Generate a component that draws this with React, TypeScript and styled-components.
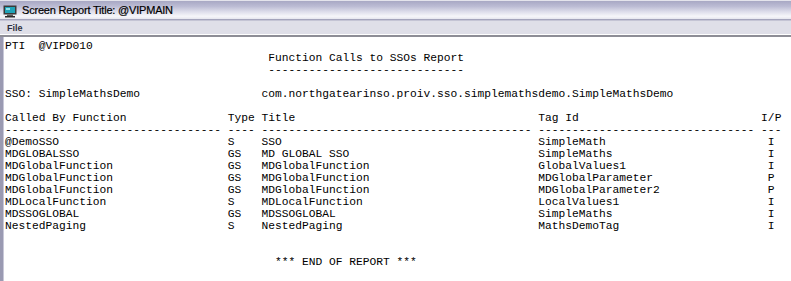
import styled, { createGlobalStyle } from 'styled-components';

const GlobalStyle = createGlobalStyle`
    html, body {
        margin: 0;
        padding: 0;
        background: #ffffff;
        overflow: hidden;
    }
`;

const reportLines = [
    "PTI  @VIPD010",
    "                                       Function Calls to SSOs Report",
    "                                       -----------------------------",
    "",
    "SSO: SimpleMathsDemo                  com.northgatearinso.proiv.sso.simplemathsdemo.SimpleMathsDemo",
    "",
    "Called By Function               Type Title                                    Tag Id                           I/P",
    "-------------------------------- ---- ---------------------------------------- -------------------------------- ---",
    "@DemoSSO                         S    SSO                                      SimpleMath                        I",
    "MDGLOBALSSO                      GS   MD GLOBAL SSO                            SimpleMaths                       I",
    "MDGlobalFunction                 GS   MDGlobalFunction                         GlobalValues1                     I",
    "MDGlobalFunction                 GS   MDGlobalFunction                         MDGlobalParameter                 P",
    "MDGlobalFunction                 GS   MDGlobalFunction                         MDGlobalParameter2                P",
    "MDLocalFunction                  S    MDLocalFunction                          LocalValues1                      I",
    "MDSSOGLOBAL                      GS   MDSSOGLOBAL                              SimpleMaths                       I",
    "NestedPaging                     S    NestedPaging                             MathsDemoTag                      I",
    "",
    "",
    "                                        *** END OF REPORT ***",
];

const App = () => {
    return (
        <Window>
            <GlobalStyle />
            <TitleBar>
                <WindowIcon width="14" height="14" viewBox="0 0 14 14">
                    <rect x="0.5" y="1.5" width="13" height="9" fill="#3a3a3a" />
                    <rect x="2" y="3" width="10" height="6" fill="#1fa3b8" />
                    <rect x="3" y="4" width="4" height="2" fill="#8fe0ea" />
                    <rect x="4" y="10.5" width="6" height="2" fill="#5a5a5a" />
                    <rect x="2" y="12" width="10" height="1.5" fill="#2a2a2a" />
                </WindowIcon>
                <TitleText>Screen Report Title: @VIPMAIN</TitleText>
            </TitleBar>
            <MenuBar>
                <MenuItem>File</MenuItem>
            </MenuBar>
            <ReportArea>
                {reportLines.map((line, i) => (
                    <ReportLine key={i}>{line || ' '}</ReportLine>
                ))}
            </ReportArea>
        </Window>
    );
};

export default App;

const Window = styled.div`
    width: 791px;
    height: 281px;
    display: flex;
    flex-direction: column;
    background: #ffffff;
    overflow: hidden;
`;

const TitleBar = styled.div`
    height: 20px;
    display: flex;
    align-items: center;
    gap: 5px;
    padding-left: 3px;
    box-sizing: border-box;
    border-top: 1px solid #e4e4ec;
    border-bottom: 1px solid #a4a4bc;
    background: linear-gradient(to bottom, #a8a8c4 0%, #bcbcd4 30%, #dedeeb 60%, #f6f6fa 85%, #e6e6ee 100%);
`;

const WindowIcon = styled.svg`
    flex: none;
    margin-top: 1px;
`;

const TitleText = styled.span`
    font-family: "Liberation Sans", Arial, sans-serif;
    font-size: 11px;
    letter-spacing: -0.2px;
    color: #000000;
    -webkit-text-stroke: 0.2px #000000;
`;

const MenuBar = styled.div`
    height: 17px;
    display: flex;
    align-items: center;
    padding-left: 7px;
    box-sizing: border-box;
    background: #dfdfe8;
    border-top: 1px solid #c4c4d4;
    border-bottom: 2px solid #8e8e96;
    box-shadow: inset 0 -1px 0 #ffffff;
`;

const MenuItem = styled.span`
    font-family: "Liberation Sans", Arial, sans-serif;
    font-size: 9px;
    font-weight: bold;
    color: #303040;
`;

const ReportArea = styled.div`
    flex: 1;
    padding: 3px 0 0 2px;
    border-left: 3px solid #9a9ab2;
    box-shadow: inset 1px 0 0 #c8c8d8;
    font-family: "Liberation Mono", "DejaVu Sans Mono", monospace;
    font-size: 11.25px;
    line-height: 12px;
    color: #000000;
`;

const ReportLine = styled.div`
    white-space: pre;
    height: 12px;
`;
